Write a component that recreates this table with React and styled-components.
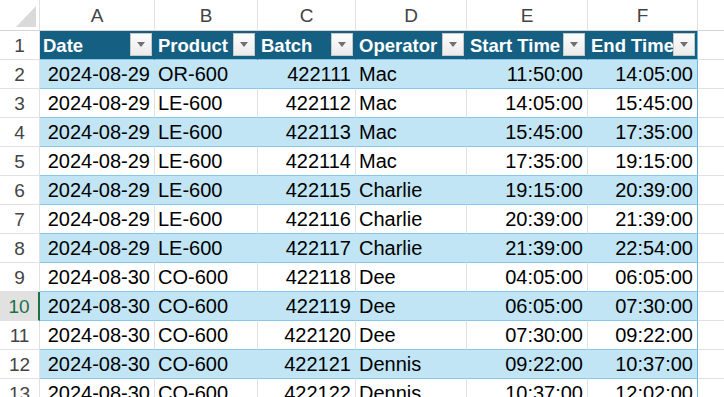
import React from 'react';
import styled, { createGlobalStyle } from 'styled-components';

const GlobalStyle = createGlobalStyle`
  body {
    margin: 0;
    background: #ffffff;
    overflow: hidden;
  }
`;

const COLS = '40px 115px 103px 98px 111px 121px 110px 110px';

const Sheet = styled.div`
  width: 724px;
  height: 397px;
  overflow: hidden;
  font-family: "Liberation Sans", Arial, sans-serif;
  background: #ffffff;
`;

const Row = styled.div`
  display: grid;
  grid-template-columns: ${COLS};
  height: ${(p) => p.$h}px;
`;

const Corner = styled.div`
  position: relative;
  border-right: 1px solid #e1e1e1;
  border-bottom: 1px solid #d4d4d4;
  box-sizing: border-box;

  &::after {
    content: '';
    position: absolute;
    right: 3px;
    bottom: 3px;
    width: 0;
    height: 0;
    border-left: 20px solid transparent;
    border-bottom: 21px solid #dadada;
  }
`;

const ColLetter = styled.div`
  display: flex;
  align-items: center;
  justify-content: center;
  box-sizing: border-box;
  border-right: 1px solid #e1e1e1;
  border-bottom: 1px solid #d4d4d4;
  color: #444444;
  font-size: 19px;
  padding-top: 2px;
`;

const RowNum = styled.div`
  display: flex;
  align-items: center;
  justify-content: center;
  box-sizing: border-box;
  padding-top: 1px;
  border-bottom: 1px solid #e1e1e1;
  border-right: ${(p) => (p.$sel ? '2px solid #1e7145' : '1px solid #e1e1e1')};
  background: ${(p) => (p.$sel ? '#e1e1e1' : '#ffffff')};
  color: ${(p) => (p.$sel ? '#1e7145' : '#444444')};
  font-size: 19px;
`;

const bg = { head: '#156082', blue: '#c1e5f5', white: '#ffffff', none: '#ffffff' };

const Cell = styled.div`
  position: relative;
  display: flex;
  align-items: center;
  justify-content: ${(p) => (p.$right ? 'flex-end' : 'flex-start')};
  box-sizing: border-box;
  padding: 1px ${(p) => (p.$right ? '4px' : '0')} 0 ${(p) => (p.$right ? '0' : '3px')};
  background: ${(p) => bg[p.$band]};
  color: ${(p) => (p.$band === 'head' ? '#ffffff' : '#000000')};
  font-size: ${(p) => (p.$band === 'head' ? '18.5px' : '20px')};
  font-weight: ${(p) => (p.$band === 'head' ? 700 : 400)};
  white-space: nowrap;
  overflow: hidden;
  border-bottom: 1px solid ${(p) => (p.$band === 'none' ? '#e1e1e1' : '#84c7e6')};
  border-right: 1px solid
    ${(p) =>
      p.$edge
        ? '#6fb9de'
        : p.$band === 'white' || p.$band === 'none'
        ? '#e1e1e1'
        : bg[p.$band]};
`;

const Filter = styled.span`
  position: absolute;
  right: 2px;
  top: 2px;
  width: 22px;
  height: 23px;
  box-sizing: border-box;
  border: 1px solid #c8c8c8;
  background: linear-gradient(#fdfdfd, #ebebeb);
  display: flex;
  align-items: center;
  justify-content: center;

  &::before {
    content: '';
    width: 0;
    height: 0;
    border-left: 4px solid transparent;
    border-right: 4px solid transparent;
    border-top: 5px solid #707070;
  }
`;

const headers = ['Date', 'Product', 'Batch', 'Operator', 'Start Time', 'End Time'];
const rightCols = [true, false, true, false, true, true];

const data = [
  ['2024-08-29', 'OR-600', '422111', 'Mac', '11:50:00', '14:05:00'],
  ['2024-08-29', 'LE-600', '422112', 'Mac', '14:05:00', '15:45:00'],
  ['2024-08-29', 'LE-600', '422113', 'Mac', '15:45:00', '17:35:00'],
  ['2024-08-29', 'LE-600', '422114', 'Mac', '17:35:00', '19:15:00'],
  ['2024-08-29', 'LE-600', '422115', 'Charlie', '19:15:00', '20:39:00'],
  ['2024-08-29', 'LE-600', '422116', 'Charlie', '20:39:00', '21:39:00'],
  ['2024-08-29', 'LE-600', '422117', 'Charlie', '21:39:00', '22:54:00'],
  ['2024-08-30', 'CO-600', '422118', 'Dee', '04:05:00', '06:05:00'],
  ['2024-08-30', 'CO-600', '422119', 'Dee', '06:05:00', '07:30:00'],
  ['2024-08-30', 'CO-600', '422120', 'Dee', '07:30:00', '09:22:00'],
  ['2024-08-30', 'CO-600', '422121', 'Dennis', '09:22:00', '10:37:00'],
  ['2024-08-30', 'CO-600', '422122', 'Dennis', '10:37:00', '12:02:00'],
];

export default function App() {
  return (
    <Sheet>
      <GlobalStyle />
      <Row $h={31}>
        <Corner />
        {['A', 'B', 'C', 'D', 'E', 'F'].map((l) => (
          <ColLetter key={l}>{l}</ColLetter>
        ))}
        <ColLetter />
      </Row>
      <Row $h={29}>
        <RowNum>1</RowNum>
        {headers.map((h, i) => (
          <Cell key={h} $band="head" $edge={i === 5}>
            {h}
            <Filter />
          </Cell>
        ))}
        <Cell $band="none" />
      </Row>
      {data.map((r, ri) => {
        const band = ri % 2 === 0 ? 'blue' : 'white';
        return (
          <Row $h={29} key={ri}>
            <RowNum $sel={ri + 2 === 10}>{ri + 2}</RowNum>
            {r.map((v, ci) => (
              <Cell key={ci} $band={band} $right={rightCols[ci]} $edge={ci === 5}>
                {v}
              </Cell>
            ))}
            <Cell $band="none" />
          </Row>
        );
      })}
    </Sheet>
  );
}
